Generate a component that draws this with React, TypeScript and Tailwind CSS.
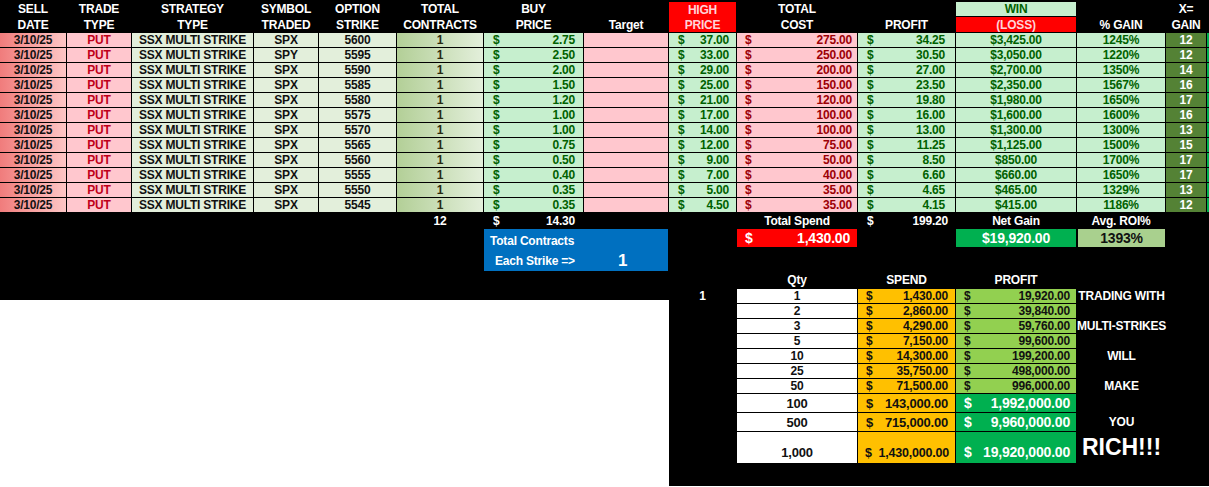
import React from "react";

type Row = {
  sym: string;
  strike: number;
  buy: string;
  high: string;
  cost: string;
  profit: string;
  win: string;
  pct: string;
  x: number;
};

const rows: Row[] = [
  { sym: "SPX", strike: 5600, buy: "2.75", high: "37.00", cost: "275.00", profit: "34.25", win: "$3,425.00", pct: "1245%", x: 12 },
  { sym: "SPY", strike: 5595, buy: "2.50", high: "33.00", cost: "250.00", profit: "30.50", win: "$3,050.00", pct: "1220%", x: 12 },
  { sym: "SPX", strike: 5590, buy: "2.00", high: "29.00", cost: "200.00", profit: "27.00", win: "$2,700.00", pct: "1350%", x: 14 },
  { sym: "SPX", strike: 5585, buy: "1.50", high: "25.00", cost: "150.00", profit: "23.50", win: "$2,350.00", pct: "1567%", x: 16 },
  { sym: "SPX", strike: 5580, buy: "1.20", high: "21.00", cost: "120.00", profit: "19.80", win: "$1,980.00", pct: "1650%", x: 17 },
  { sym: "SPX", strike: 5575, buy: "1.00", high: "17.00", cost: "100.00", profit: "16.00", win: "$1,600.00", pct: "1600%", x: 16 },
  { sym: "SPX", strike: 5570, buy: "1.00", high: "14.00", cost: "100.00", profit: "13.00", win: "$1,300.00", pct: "1300%", x: 13 },
  { sym: "SPX", strike: 5565, buy: "0.75", high: "12.00", cost: "75.00", profit: "11.25", win: "$1,125.00", pct: "1500%", x: 15 },
  { sym: "SPX", strike: 5560, buy: "0.50", high: "9.00", cost: "50.00", profit: "8.50", win: "$850.00", pct: "1700%", x: 17 },
  { sym: "SPX", strike: 5555, buy: "0.40", high: "7.00", cost: "40.00", profit: "6.60", win: "$660.00", pct: "1650%", x: 17 },
  { sym: "SPX", strike: 5550, buy: "0.35", high: "5.00", cost: "35.00", profit: "4.65", win: "$465.00", pct: "1329%", x: 13 },
  { sym: "SPX", strike: 5545, buy: "0.35", high: "4.50", cost: "35.00", profit: "4.15", win: "$415.00", pct: "1186%", x: 12 },
];

type Tier = { qty: string; spend: string; profit: string; note: string; big?: boolean };

const tiers: Tier[] = [
  { qty: "1", spend: "1,430.00", profit: "19,920.00", note: "TRADING WITH" },
  { qty: "2", spend: "2,860.00", profit: "39,840.00", note: "" },
  { qty: "3", spend: "4,290.00", profit: "59,760.00", note: "MULTI-STRIKES" },
  { qty: "5", spend: "7,150.00", profit: "99,600.00", note: "" },
  { qty: "10", spend: "14,300.00", profit: "199,200.00", note: "WILL" },
  { qty: "25", spend: "35,750.00", profit: "498,000.00", note: "" },
  { qty: "50", spend: "71,500.00", profit: "996,000.00", note: "MAKE" },
  { qty: "100", spend: "143,000.00", profit: "1,992,000.00", note: "", big: true },
  { qty: "500", spend: "715,000.00", profit: "9,960,000.00", note: "YOU", big: true },
  { qty: "1,000", spend: "1,430,000.00", profit: "19,920,000.00", note: "RICH!!!", big: true },
];

function Money({ value, className }: { value: string; className: string }) {
  return (
    <div className={`flex items-center justify-between ${className}`}>
      <span>$</span>
      <span>{value}</span>
    </div>
  );
}

const head = "flex items-center justify-center leading-none text-white";
const mid = "flex items-center justify-center leading-[14px]";

export default function App() {
  return (
    <div className="w-[1209px] font-['Liberation_Sans',Arial,sans-serif] text-[12px] font-bold tracking-[-0.2px]">
      {/* main sheet */}
      <div className="grid h-[272px] grid-cols-[66px_64px_121px_64px_77px_86px_99px_84px_67px_120px_97px_120px_88px_40px_2px] grid-rows-[16px_15px_repeat(12,14px)_15px_18px_23px] gap-px bg-black content-start">
        <div className={`${head} pt-px`}>SELL</div>
        <div className={`${head} pt-px`}>TRADE</div>
        <div className={`${head} pt-px`}>STRATEGY</div>
        <div className={`${head} pt-px`}>SYMBOL</div>
        <div className={`${head} pt-px`}>OPTION</div>
        <div className={`${head} pt-px`}>TOTAL</div>
        <div className={`${head} pt-px`}>BUY</div>
        <div />
        <div className="row-span-2 mt-[2px] flex flex-col items-center justify-center gap-[3px] bg-[#ff0000] leading-none text-[#ffd3d8]">
          <span>HIGH</span>
          <span>PRICE</span>
        </div>
        <div className={`${head} pt-px`}>TOTAL</div>
        <div />
        <div className="mt-[2px] flex items-center justify-center bg-[#c6efce] leading-none text-[#006100]">WIN</div>
        <div />
        <div className={`${head} pt-px`}>X=</div>
        <div />

        <div className={head}>DATE</div>
        <div className={head}>TYPE</div>
        <div className={head}>TYPE</div>
        <div className={head}>TRADED</div>
        <div className={head}>STRIKE</div>
        <div className={head}>CONTRACTS</div>
        <div className={head}>PRICE</div>
        <div className={head}>Target</div>
        <div className={head}>COST</div>
        <div className={head}>PROFIT</div>
        <div className="flex items-center justify-center bg-[#ff0000] leading-none text-[#ffd3d8]">(LOSS)</div>
        <div className={head}>% GAIN</div>
        <div className={head}>GAIN</div>
        <div />

        {rows.map((r) => (
          <React.Fragment key={r.strike}>
            <div className={`${mid} bg-gradient-to-r from-[#f07c7c] to-[#fdc6c6] text-[#111]`}>3/10/25</div>
            <div className={`${mid} bg-[#ffc7ce] text-[#c0001a]`}>PUT</div>
            <div className={`${mid} bg-[#e3efdb] text-[#111]`}>SSX MULTI STRIKE</div>
            <div className={`${mid} bg-[#e3efdb] text-[#111]`}>{r.sym}</div>
            <div className={`${mid} bg-[#e3efdb] text-[#111]`}>{r.strike}</div>
            <div className={`${mid} bg-gradient-to-r from-[#b3cf97] to-[#e3efdb] text-[#2a2a10]`}>1</div>
            <Money value={r.buy} className="bg-[#c6efce] pl-[9px] pr-[8px] leading-[14px] text-[#006100]" />
            <div className="bg-[#ffc7ce]" />
            <Money value={r.high} className="bg-[#c6efce] pl-[9px] pr-[7px] leading-[14px] text-[#006100]" />
            <Money value={r.cost} className="bg-[#ffc7ce] pl-[8px] pr-[5px] leading-[14px] text-[#9c0006]" />
            <Money value={r.profit} className="bg-[#c6efce] pl-[9px] pr-[10px] leading-[14px] text-[#006100]" />
            <div className={`${mid} bg-[#c6efce] text-[#006100]`}>{r.win}</div>
            <div className={`${mid} bg-[#c6efce] text-[#006100]`}>{r.pct}</div>
            <div className={`${mid} bg-[#548235] text-white`}>{r.x}</div>
            <div className="bg-[#00b050]" />
          </React.Fragment>
        ))}

        {/* totals */}
        <div className={`${head} col-start-6 row-start-15`}>12</div>
        <Money value="14.30" className="col-start-7 row-start-15 pl-[9px] pr-[8px] leading-none text-white" />
        <div className={`${head} col-start-10 row-start-15`}>Total Spend</div>
        <Money value="199.20" className="col-start-11 row-start-15 pl-[9px] pr-[7px] leading-none text-white" />
        <div className={`${head} col-start-12 row-start-15`}>Net Gain</div>
        <div className={`${head} col-start-13 row-start-15`}>Avg. ROI%</div>

        <div className="col-span-2 col-start-7 row-span-2 row-start-16 flex flex-col bg-[#0070c0] text-white">
          <div className="flex h-[21px] items-center pl-[6px] pt-[2px] leading-none">Total Contracts</div>
          <div className="flex h-[21px] items-center leading-none">
            <span className="w-[134px] pl-[11px]">Each Strike =&gt;</span>
            <span className="text-[17px]">1</span>
          </div>
        </div>
        <Money value="1,430.00" className="col-start-10 row-start-16 bg-[#ff0000] pl-[8px] pr-[7px] text-[14px] leading-none text-white" />
        <div className="col-start-12 row-start-16 flex items-center justify-center bg-[#00b050] text-[14px] leading-none text-white">
          $19,920.00
        </div>
        <div className="col-start-13 row-start-16 ml-px flex items-center justify-center bg-[#a9d08e] text-[14px] leading-none text-[#111]">
          1393%
        </div>
      </div>

      {/* multiplier table */}
      <div className="flex h-[214px]">
        <div className="flex w-[669px] flex-col">
          <div className="h-[28px] bg-black" />
          <div className="flex-1 bg-white" />
        </div>
        <div className="grid flex-1 grid-cols-[67px_120px_97px_120px_89px_1fr] grid-rows-[16px_repeat(7,14px)_18px_18px_31px] content-start gap-px bg-black">
          <div />
          <div className={head}>Qty</div>
          <div className={head}>SPEND</div>
          <div className={head}>PROFIT</div>
          <div />
          <div />
          {tiers.map((t, i) => {
            const last = i === tiers.length - 1;
            const align = last ? "items-end pb-[4px]" : "items-center";
            return (
              <React.Fragment key={t.qty}>
                <div className={head}>{i === 0 ? "1" : ""}</div>
                <div
                  className={`flex justify-center bg-white text-[#111] ${align} ${
                    t.big ? "text-[13px] leading-none" : "leading-[14px]"
                  }`}
                >
                  {t.qty}
                </div>
                <div
                  className={`flex justify-between bg-[#ffc000] text-[#111] ${align} ${
                    last
                      ? "pl-[7px] pr-[6px] text-[12.5px] leading-none"
                      : t.big
                        ? "pl-[8px] pr-[7px] text-[13px] leading-none"
                        : "pl-[8px] pr-[7px] leading-[14px]"
                  }`}
                >
                  <span>$</span>
                  <span>{t.spend}</span>
                </div>
                <div
                  className={`flex justify-between pl-[8px] pr-[6px] ${align} ${
                    t.big
                      ? "bg-[#00b050] text-[14px] leading-none text-white"
                      : "bg-[#92d050] leading-[14px] text-[#111]"
                  }`}
                >
                  <span>$</span>
                  <span>{t.profit}</span>
                </div>
                <div
                  className={`flex items-center justify-center whitespace-nowrap text-white ${
                    last ? "text-[23px] leading-none tracking-normal" : "leading-none"
                  }`}
                >
                  {t.note}
                </div>
                <div />
              </React.Fragment>
            );
          })}
        </div>
      </div>
    </div>
  );
}
